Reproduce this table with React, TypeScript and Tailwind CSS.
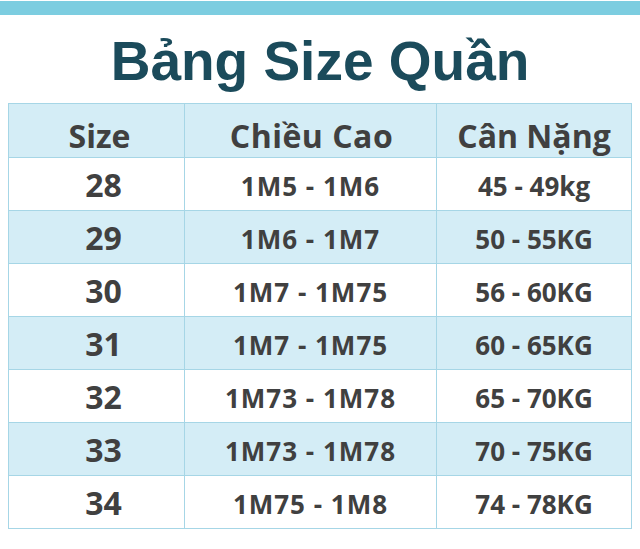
const rows = [
  { size: '28', height: '1M5 - 1M6', weight: '45 - 49kg' },
  { size: '29', height: '1M6 - 1M7', weight: '50 - 55KG' },
  { size: '30', height: '1M7 - 1M75', weight: '56 - 60KG' },
  { size: '31', height: '1M7 - 1M75', weight: '60 - 65KG' },
  { size: '32', height: '1M73 - 1M78', weight: '65 - 70KG' },
  { size: '33', height: '1M73 - 1M78', weight: '70 - 75KG' },
  { size: '34', height: '1M75 - 1M8', weight: '74 - 78KG' },
]

function App() {
  return (
    <div className="w-[640px] h-[549px] bg-white overflow-hidden">
      {/* top bar */}
      <div className="mt-[1px] h-[14px] bg-[#7ccde0]" />

      {/* title */}
      <h1 className="mt-[19px] h-[57px] text-center text-[55px] leading-none font-bold text-[#1b4b5b] font-['Liberation_Sans',Arial,sans-serif]">
        Bảng Size Quần
      </h1>

      {/* table */}
      <div className="mt-[12px] ml-[8px] w-[624px] border border-[#a6d6e6] font-['Open_Sans',sans-serif] font-bold text-[#404040]">
        <div className="grid grid-cols-[175px_252px_195px] h-[53px] bg-[#d4edf6]">
          <div className="flex items-center justify-center pt-[10px] pl-[6px] text-[32px] leading-none">Size</div>
          <div className="flex items-center justify-center pt-[10px] pl-[2px] text-[32px] leading-none tracking-[0.5px] border-l border-[#a6d6e6]">Chiều Cao</div>
          <div className="flex items-center justify-center pt-[10px] text-[32px] leading-none border-l border-[#a6d6e6]">Cân Nặng</div>
        </div>
        {rows.map((r, i) => (
          <div
            key={r.size}
            className={
              'grid grid-cols-[175px_252px_195px] h-[53px] border-t border-[#a6d6e6] ' +
              (i % 2 === 0 ? 'bg-white' : 'bg-[#d4edf6]')
            }
          >
            <div className="flex items-center justify-center pt-[2px] pl-[14px] text-[32px] leading-none">{r.size}</div>
            <div className="flex items-center justify-center pt-[4px] text-[26px] leading-none tracking-[1px] border-l border-[#a6d6e6]">{r.height}</div>
            <div className="flex items-center justify-center pt-[4px] text-[26px] leading-none border-l border-[#a6d6e6]">{r.weight}</div>
          </div>
        ))}
      </div>
    </div>
  )
}

export default App
